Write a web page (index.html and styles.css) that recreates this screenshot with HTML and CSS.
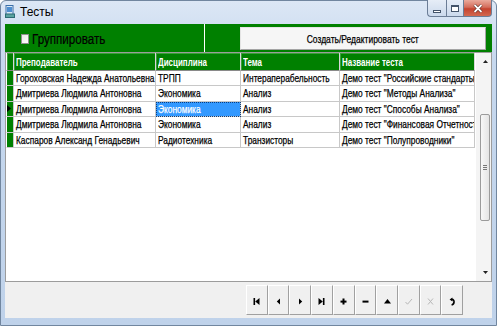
FILE: index.html
```html
<!DOCTYPE html>
<html lang="ru">

<head>
    <meta charset="UTF-8">
    <title>Тесты</title>
    <link rel="stylesheet" href="styles.css">
</head>

<body>
    <div class="window">
        <div class="titlebar">
            <svg class="app-icon" viewBox="0 0 10 13">
                <rect x="1" y="0.5" width="7" height="9" fill="#d9e8f6" stroke="#3c6fa8" />
                <rect x="2" y="2" width="5" height="5" fill="#4f8fd0" />
                <rect x="0.5" y="9" width="9" height="3.5" fill="#5aa3a0" stroke="#2c6b72" />
            </svg>
            <span class="title">Тесты</span>
            <div class="caption-buttons">
                <div class="cap-btn cap-min"><span class="min-glyph"></span></div>
                <div class="cap-btn cap-max"><span class="max-glyph"></span></div>
                <div class="cap-btn cap-close">
                    <svg viewBox="0 0 10 9">
                        <path d="M1.5 1 L8.5 8 M8.5 1 L1.5 8" stroke="#4a1c14" stroke-width="3" />
                        <path d="M1.5 1 L8.5 8 M8.5 1 L1.5 8" stroke="#ffffff" stroke-width="1.8" />
                    </svg>
                </div>
            </div>
        </div>

        <div class="client">
            <div class="top-panel">
                <div class="group-panel">
                    <label class="group-check"><span class="checkbox"></span><span class="txt">Группировать</span></label>
                </div>
                <div class="action-panel">
                    <button class="edit-button"><span class="txt">Создать/Редактировать тест</span></button>
                </div>
            </div>

            <div class="grid">
                <div class="grid-table">
                    <div class="row header">
                        <div class="cell ind"></div>
                        <div class="cell"><span class="txt">Преподаватель</span></div>
                        <div class="cell"><span class="txt">Дисциплина</span></div>
                        <div class="cell"><span class="txt">Тема</span></div>
                        <div class="cell"><span class="txt">Название теста</span></div>
                    </div>
                    <div class="row">
                        <div class="cell ind"></div>
                        <div class="cell"><span class="txt">Гороховская Надежда Анатольевна</span></div>
                        <div class="cell"><span class="txt">ТРПП</span></div>
                        <div class="cell"><span class="txt">Интераперабельность</span></div>
                        <div class="cell"><span class="txt">Демо тест "Российские стандарты"</span></div>
                    </div>
                    <div class="row">
                        <div class="cell ind"></div>
                        <div class="cell"><span class="txt">Дмитриева Людмила Антоновна</span></div>
                        <div class="cell"><span class="txt">Экономика</span></div>
                        <div class="cell"><span class="txt">Анализ</span></div>
                        <div class="cell"><span class="txt">Демо тест "Методы Анализа"</span></div>
                    </div>
                    <div class="row current">
                        <div class="cell ind">
                            <svg class="row-arrow" viewBox="0 0 4 7">
                                <polygon points="0,0 4,3.5 0,7" fill="#000" />
                            </svg>
                        </div>
                        <div class="cell"><span class="txt">Дмитриева Людмила Антоновна</span></div>
                        <div class="cell selected"><span class="txt">Экономика</span></div>
                        <div class="cell"><span class="txt">Анализ</span></div>
                        <div class="cell"><span class="txt">Демо тест "Способы Анализа"</span></div>
                    </div>
                    <div class="row">
                        <div class="cell ind"></div>
                        <div class="cell"><span class="txt">Дмитриева Людмила Антоновна</span></div>
                        <div class="cell"><span class="txt">Экономика</span></div>
                        <div class="cell"><span class="txt">Анализ</span></div>
                        <div class="cell"><span class="txt">Демо тест "Финансовая Отчетность"</span></div>
                    </div>
                    <div class="row">
                        <div class="cell ind"></div>
                        <div class="cell"><span class="txt">Каспаров Александ Генадьевич</span></div>
                        <div class="cell"><span class="txt">Радиотехника</span></div>
                        <div class="cell"><span class="txt">Транзисторы</span></div>
                        <div class="cell"><span class="txt">Демо тест "Полупроводники"</span></div>
                    </div>
                </div>

                <div class="scrollbar">
                    <div class="sb-btn">
                        <svg viewBox="0 0 5 3"><polygon points="0,3 2.5,0 5,3" fill="#222" /></svg>
                    </div>
                    <div class="sb-track">
                        <div class="sb-thumb"><span class="grip"></span></div>
                    </div>
                    <div class="sb-btn">
                        <svg viewBox="0 0 5 3"><polygon points="0,0 5,0 2.5,3" fill="#222" /></svg>
                    </div>
                </div>
            </div>

            <div class="navigator">
                <div class="nav-buttons">
                    <div class="nav-btn">
                        <svg viewBox="0 0 9 9"><rect x="1.5" y="1" width="1.6" height="7" /><polygon points="7.5,1 3.2,4.5 7.5,8" /></svg>
                    </div>
                    <div class="nav-btn">
                        <svg viewBox="0 0 9 9"><polygon points="6,1.5 2.8,4.5 6,7.5" /></svg>
                    </div>
                    <div class="nav-btn">
                        <svg viewBox="0 0 9 9"><polygon points="3,1.5 6.2,4.5 3,7.5" /></svg>
                    </div>
                    <div class="nav-btn">
                        <svg viewBox="0 0 9 9"><polygon points="1.5,1 5.8,4.5 1.5,8" /><rect x="5.9" y="1" width="1.6" height="7" /></svg>
                    </div>
                    <div class="nav-btn">
                        <svg viewBox="0 0 9 9"><rect x="1.5" y="3.6" width="6" height="2" /><rect x="3.5" y="1.5" width="2" height="6" /></svg>
                    </div>
                    <div class="nav-btn">
                        <svg viewBox="0 0 9 9"><rect x="1.5" y="3.6" width="6" height="2" /></svg>
                    </div>
                    <div class="nav-btn">
                        <svg viewBox="0 0 9 9"><polygon points="1,6.5 4.5,2 8,6.5" /></svg>
                    </div>
                    <div class="nav-btn disabled">
                        <svg viewBox="0 0 9 9"><path d="M1.5 5 L3.5 7.2 L8 2" fill="none" stroke="#b8b8b8" stroke-width="1" /></svg>
                    </div>
                    <div class="nav-btn disabled">
                        <svg viewBox="0 0 9 9"><path d="M2 1.5 L7 7.5 M7 1.5 L2 7.5" fill="none" stroke="#b8b8b8" stroke-width="1" /></svg>
                    </div>
                    <div class="nav-btn">
                        <svg viewBox="0 0 9 9">
                            <path d="M3.6 8 C6.8 7.2 6.8 2.4 4 2.4" fill="none" stroke="#000" stroke-width="1.6" />
                            <polygon points="1.6,2.4 4.4,0.4 4.4,4.4" />
                        </svg>
                    </div>
                </div>
            </div>
        </div>
    </div>
</body>

</html>
```

FILE: styles.css
```css
* {
    margin: 0;
    padding: 0;
    box-sizing: border-box;
}

body {
    width: 497px;
    height: 326px;
    overflow: hidden;
    background: #ffffff;
    font-family: "Liberation Sans", Arial, sans-serif;
}

/* the old app draws narrow text, so squeeze the labels a bit */
.txt {
    display: inline-block;
    white-space: nowrap;
    transform: scaleX(0.75);
    transform-origin: left center;
}

.window {
    width: 497px;
    height: 326px;
    display: flex;
    flex-direction: column;
    background: linear-gradient(#dce7f5, #c6d8ee 60px, #bfd2ea);
    border: 1px solid #71869f;
    border-radius: 6px 6px 0 0;
}

/* title bar */

.titlebar {
    height: 23px;
    display: flex;
    align-items: flex-start;
    padding-left: 4px;
}

.app-icon {
    width: 10px;
    height: 13px;
    margin-top: 4px;
}

.title {
    font-size: 12px;
    line-height: 14px;
    margin-top: 4px;
    margin-left: 5px;
    color: #000000;
}

.caption-buttons {
    margin-left: auto;
    margin-right: 4px;
    margin-top: -1px;
    display: flex;
}

.cap-btn {
    height: 17px;
    border: 1px solid #6b7d96;
    border-top: none;
    display: flex;
    align-items: center;
    justify-content: center;
}

.cap-min {
    width: 19px;
    border-right: none;
    border-radius: 0 0 0 4px;
    background: linear-gradient(#e6edf7, #cbd9ec);
}

.cap-max {
    width: 17px;
    border-right: none;
    background: linear-gradient(#e6edf7, #cbd9ec);
}

.cap-close {
    width: 29px;
    border-radius: 0 0 4px 0;
    background: linear-gradient(#eaaa9c, #d46e5c 45%, #c5432f 55%, #d2684f);
}

.cap-close svg {
    width: 10px;
    height: 9px;
}

.min-glyph {
    width: 8px;
    height: 3px;
    margin-top: 6px;
    background: #ffffff;
    border: 1px solid #44546a;
}

.max-glyph {
    width: 8px;
    height: 7px;
    background: #ffffff;
    border: 1px solid #44546a;
    border-top-width: 2px;
}

/* client area */

.client {
    flex: 1;
    margin: 0 4px 7px 4px;
    display: flex;
    flex-direction: column;
    background: #f0f0f0;
}

.top-panel {
    height: 28px;
    display: flex;
    background: #008000;
}

.group-panel {
    width: 200px;
    border-right: 1px solid #ffffff;
    display: flex;
    align-items: center;
    padding-left: 16px;
}

.group-check {
    display: flex;
    align-items: center;
    font-size: 14px;
    color: #000000;
    padding-top: 2px;
    -webkit-text-stroke: 0.2px #000000;
}

.group-check .txt {
    transform: scaleX(0.83);
}

.checkbox {
    width: 8px;
    height: 10px;
    margin-right: 3px;
    background: linear-gradient(135deg, #e8e8e8, #ffffff);
    border: 1px solid #8e8f8f;
}

.action-panel {
    flex: 1;
    display: flex;
    justify-content: flex-end;
    align-items: flex-start;
    padding: 3px 6px 0 0;
}

.edit-button {
    width: 246px;
    height: 23px;
    font-family: inherit;
    font-size: 11px;
    color: #000000;
    background: #f6f6f6;
    border: 1px solid;
    border-color: #e4e4e4 #a5a5a5 #a5a5a5 #e4e4e4;
    -webkit-text-stroke: 0.25px #000000;
}

.edit-button .txt {
    transform: scaleX(0.77);
    transform-origin: center;
}

/* grid */

.grid {
    height: 230px;
    display: flex;
    border: 1px solid #9c9c9c;
    background: #ffffff;
}

.grid-table {
    width: 469px;
    overflow: hidden;
}

.row {
    display: grid;
    grid-template-columns: 8px 142px 85px 99px 135px;
    height: 15.4px;
}

.cell {
    border-right: 1px solid #c8c8c8;
    border-bottom: 1px solid #c8c8c8;
    padding: 1px 0 0 2px;
    font-size: 11px;
    line-height: 13px;
    color: #000000;
    white-space: nowrap;
    overflow: hidden;
    -webkit-text-stroke: 0.25px currentColor;
}

.cell .txt {
    transform: scaleX(0.76);
}

.cell.ind {
    padding: 0;
    background: #008000;
    border-left: 1px solid #ffffff;
    display: flex;
    align-items: center;
}

.header {
    height: 18px;
}

.header .cell {
    background: #008000;
    color: #ffffff;
    font-size: 10.5px;
    font-weight: bold;
    line-height: 16px;
    padding-top: 1px;
    border-right-color: #d8d8d8;
    border-bottom-color: #8a8a8a;
    box-shadow: inset 1px 1px 0 #3aa03a;
    -webkit-text-stroke: 0;
}

.header .txt {
    transform: scaleX(0.76);
}

.row-arrow {
    width: 4px;
    height: 7px;
}

.cell.selected {
    background: #3399ff;
    color: #ffffff;
    outline: 1px dotted #0b3f80;
    outline-offset: -1px;
}

/* scrollbar */

.scrollbar {
    flex: 1;
    display: flex;
    flex-direction: column;
    background: #f4f4f4;
    border-left: 1px solid #ffffff;
}

.sb-btn {
    height: 17px;
    display: flex;
    align-items: center;
    justify-content: center;
    padding-left: 4px;
}

.sb-btn svg {
    width: 5px;
    height: 3px;
}

.sb-track {
    flex: 1;
    padding: 44px 1px 0 4px;
}

.sb-thumb {
    height: 107px;
    border: 1px solid #9b9b9b;
    border-radius: 2px;
    background: linear-gradient(90deg, #f7f7f7, #e4e4e4);
    display: flex;
    align-items: center;
    justify-content: center;
}

.grip {
    width: 4px;
    height: 5px;
    border-top: 1px solid #777777;
    border-bottom: 1px solid #777777;
    background: linear-gradient(transparent 1px, #777777 1px, #777777 2px, transparent 2px);
}

/* navigator */

.navigator {
    flex: 1;
    display: flex;
    justify-content: flex-end;
    padding: 3px 29px 0 0;
}

.nav-buttons {
    width: 217px;
    height: 30px;
    display: flex;
}

.nav-btn {
    flex: 1;
    display: flex;
    align-items: center;
    justify-content: center;
    padding-top: 3px;
    background: #f0f0f0;
    border: 1px solid;
    border-color: #ffffff #a0a0a0 #a0a0a0 #ffffff;
}

.nav-btn svg {
    width: 9px;
    height: 9px;
    fill: #000000;
}
```
